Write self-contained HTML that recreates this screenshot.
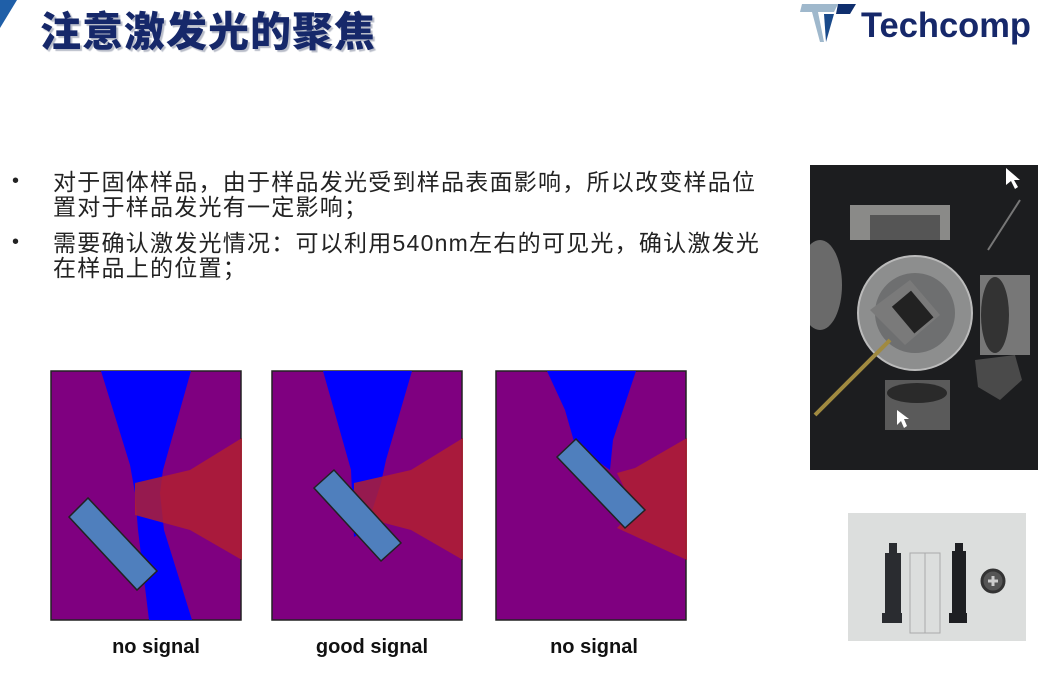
<!DOCTYPE html>
<html><head><meta charset="utf-8"><style>
body{margin:0;width:1057px;height:674px;background:#fff;position:relative;overflow:hidden;font-family:"Liberation Sans","Noto Sans CJK SC",sans-serif;}
.t{position:absolute;left:40px;top:-2px;font-size:41px;font-weight:900;color:#16286a;font-family:"Noto Sans CJK SC",sans-serif;text-shadow:2px 2px 1px #b8bcc8;letter-spacing:1px}
.b{position:absolute;left:53px;font-size:23px;color:#222;letter-spacing:1.25px;white-space:nowrap;line-height:25px}
.d{position:absolute;left:12px;font-size:20px;color:#222}
.lab{position:absolute;top:636px;font-size:20px;font-weight:bold;color:#111;width:200px;text-align:center}
svg.p{position:absolute;top:370px}
</style></head><body>
<svg style="position:absolute;left:0;top:0" width="20" height="30"><polygon points="0,0 17,0 0,28" fill="#1f5fa8"/></svg>
<div class="t">注意激发光的聚焦</div>
<svg style="position:absolute;left:798px;top:2px" width="250" height="44">
<polygon points="4,2 40,2 36,10 20,10 26,40 22,40 14,10 2,10" fill="#9fb8cc"/>
<polygon points="40,2 58,2 52,12 38,12" fill="#0f2f6e"/>
<polygon points="26,12 36,12 28,40" fill="#1a4a8a"/>
<text x="63" y="35" font-family="Liberation Sans" font-weight="bold" font-size="35" fill="#16286a" textLength="170" lengthAdjust="spacingAndGlyphs">Techcomp</text>
</svg>
<div class="d" style="top:170px">•</div>
<div class="b" style="top:170px">对于固体样品，由于样品发光受到样品表面影响，所以改变样品位</div>
<div class="b" style="top:195px">置对于样品发光有一定影响；</div>
<div class="d" style="top:231px">•</div>
<div class="b" style="top:231px">需要确认激发光情况：可以利用540nm左右的可见光，确认激发光</div>
<div class="b" style="top:256px">在样品上的位置；</div>

<svg class="p" style="left:50px" width="193" height="252"><rect x="1" y="1" width="190" height="249" fill="#7f0080" stroke="#222" stroke-width="1.5"/>
<path d="M51,1 L141,1 L113,100 L110,123 L114,160 L142,250 L99,250 L88,160 L85,123 L80,95 Z" fill="#0000ff"/>
<path d="M192,68 L140,100 L85,113 L85,145 L140,160 L192,190Z" fill="#b01e30" opacity="0.85"/>
<polygon points="38,128 19,147 87,220 107,201" fill="#4f7fbd" stroke="#222" stroke-width="1.5"/></svg>

<svg class="p" style="left:271px" width="193" height="252"><rect x="1" y="1" width="190" height="249" fill="#7f0080" stroke="#222" stroke-width="1.5"/>
<path d="M52,1 L141,1 L115,90 L110,113 L95,160 L83,167 L80,100 Z" fill="#0000ff"/>
<path d="M192,68 L140,100 L83,113 L83,145 L140,160 L192,190Z" fill="#b01e30" opacity="0.85"/>
<polygon points="63,100 43,118 110,191 130,173" fill="#4f7fbd" stroke="#222" stroke-width="1.5"/></svg>

<svg class="p" style="left:495px" width="193" height="252"><rect x="1" y="1" width="190" height="249" fill="#7f0080" stroke="#222" stroke-width="1.5"/>
<path d="M52,1 L141,1 L118,70 L115,100 L80,75 L70,40 Z" fill="#0000ff"/>
<path d="M192,68 L140,98 L122,103 L140,140 L122,158 L192,190Z" fill="#b01e30" opacity="0.85"/>
<polygon points="81,69 62,87 130,158 150,140" fill="#4f7fbd" stroke="#222" stroke-width="1.5"/></svg>

<div class="lab" style="left:56px">no signal</div>
<div class="lab" style="left:272px">good signal</div>
<div class="lab" style="left:494px">no signal</div>

<svg style="position:absolute;left:810px;top:165px" width="228" height="305">
<rect width="228" height="305" fill="#1c1d1f"/>
<ellipse cx="10" cy="120" rx="22" ry="45" fill="#6a6a6a"/>
<rect x="40" y="40" width="100" height="35" fill="#8a8a88"/>
<rect x="60" y="50" width="70" height="25" fill="#555"/>
<circle cx="105" cy="148" r="57" fill="#8d8e8e" stroke="#bbb" stroke-width="2"/>
<circle cx="105" cy="148" r="40" fill="#6e6f70"/>
<polygon points="60,145 100,115 130,150 95,180" fill="#7a7a7a"/>
<rect x="90" y="130" width="25" height="35" fill="#222" transform="rotate(-40 102 147)"/>
<line x1="5" y1="250" x2="80" y2="175" stroke="#a08a40" stroke-width="4"/>
<rect x="170" y="110" width="50" height="80" fill="#777"/>
<ellipse cx="185" cy="150" rx="14" ry="38" fill="#333"/>
<polygon points="165,195 205,190 212,215 190,235 168,222" fill="#4a4a4a"/>
<rect x="75" y="215" width="65" height="50" fill="#5a5a5a"/>
<ellipse cx="107" cy="228" rx="30" ry="10" fill="#2a2a2a"/>
<line x1="178" y1="85" x2="210" y2="35" stroke="#777" stroke-width="2"/>
<polygon points="196,3 196,20 201,16 205,24 208,22 204,15 210,15" fill="#fff"/>
<polygon points="87,245 87,260 91,256 94,263 97,261 94,254 99,254" fill="#fff"/>
</svg>

<svg style="position:absolute;left:848px;top:513px" width="178" height="128">
<rect width="178" height="128" fill="#dcdedd"/>
<rect x="37" y="40" width="16" height="60" fill="#2a2c30"/>
<rect x="41" y="30" width="8" height="14" fill="#2a2c30"/>
<rect x="34" y="100" width="20" height="10" fill="#2a2c30"/>
<rect x="62" y="40" width="30" height="80" fill="none" stroke="#aaa"/>
<line x1="77" y1="40" x2="77" y2="120" stroke="#aaa"/>
<rect x="104" y="38" width="14" height="68" fill="#1e1f22"/>
<rect x="107" y="30" width="8" height="10" fill="#1e1f22"/>
<rect x="101" y="100" width="18" height="10" fill="#1e1f22"/>
<circle cx="145" cy="68" r="11" fill="#555" stroke="#333" stroke-width="3"/>
<path d="M140,68 h10 M145,63 v10" stroke="#ccc" stroke-width="3"/>
</svg>
</body></html>
